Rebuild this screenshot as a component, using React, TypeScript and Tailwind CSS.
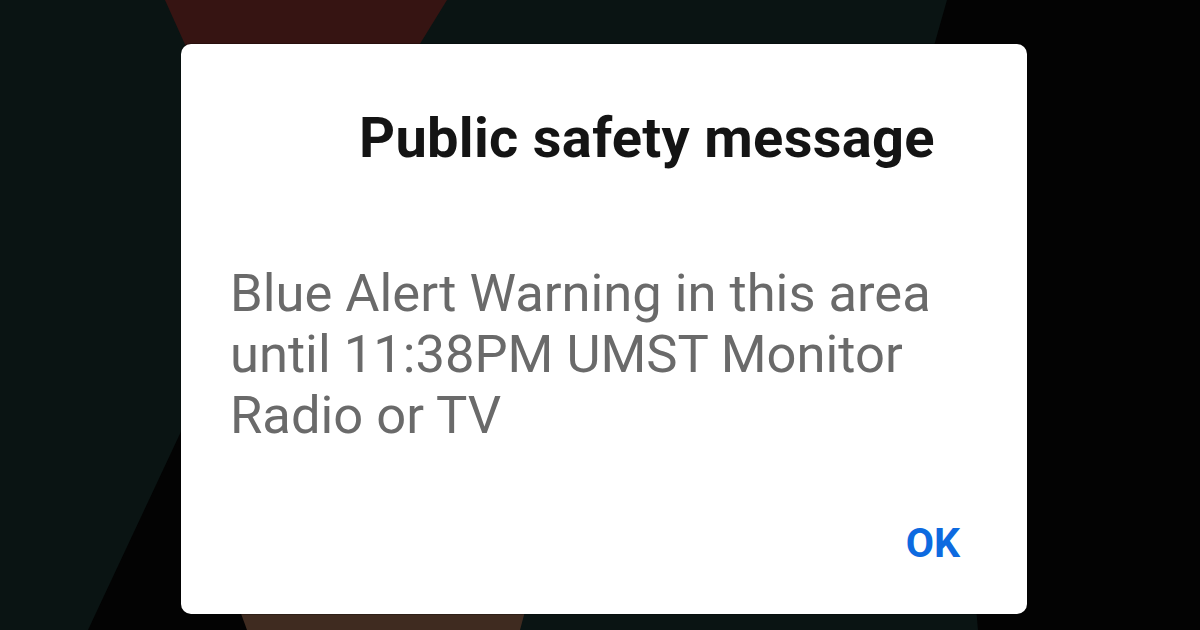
import React from "react";

// Dim wallpaper that sits behind the alert dialog
function Wallpaper() {
  return (
    <svg
      className="absolute inset-0 h-full w-full"
      viewBox="0 0 1200 630"
      preserveAspectRatio="none"
    >
      <rect x="0" y="0" width="1200" height="630" fill="#0a1413" />
      <polygon points="947,0 1200,0 1200,630 978,630 930,60" fill="#030303" />
      <polygon points="88,630 372,24 420,24 262,630" fill="#030303" />
      <polygon points="165,0 447,0 410,60 192,60" fill="#361412" />
      <polygon points="236,600 528,600 520,630 247,630" fill="#3f2b20" />
    </svg>
  );
}

export default function App() {
  return (
    <div
      className="relative h-[630px] w-[1200px] overflow-hidden"
      style={{ fontFamily: "Roboto, 'Noto Sans', Arial, sans-serif" }}
    >
      <Wallpaper />
      <div className="relative flex pl-[181px] pt-[44px]">
        <div className="flex h-[570px] w-[846px] flex-col rounded-[10px] bg-white shadow-[0_0_0_1px_rgba(0,0,0,0.25)]">
          <h1 className="mt-[66px] pl-[178px] text-[56px] font-bold leading-[56px] tracking-[0.3px] text-[#141414]">
            Public safety message
          </h1>
          <p className="mt-[97px] pl-[49px] pr-[60px] text-[52.5px] leading-[61px] text-[#6a6a6a]">
            Blue Alert Warning in this area
            <br />
            until 11:38PM UMST Monitor
            <br />
            Radio or TV
          </p>
          <div className="mt-[77px] flex justify-end pr-[67px]">
            <button className="text-[41px] font-bold leading-[41px] text-[#0d6ae0]">
              OK
            </button>
          </div>
        </div>
      </div>
    </div>
  );
}
